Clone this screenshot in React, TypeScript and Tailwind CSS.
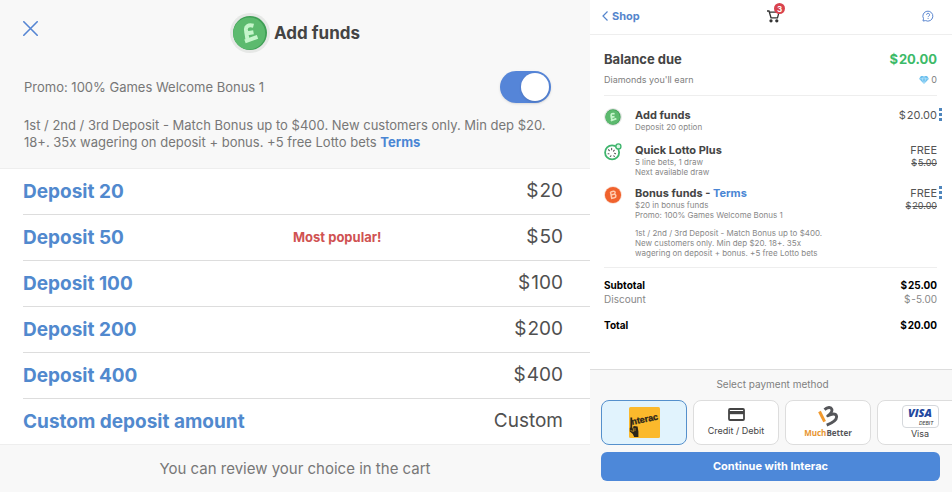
import React, { useState } from "react";

const depositOptions = [
  { label: "Deposit 20", amount: "20" },
  { label: "Deposit 50", amount: "50", note: "Most popular!" },
  { label: "Deposit 100", amount: "100" },
  { label: "Deposit 200", amount: "200" },
  { label: "Deposit 400", amount: "400" },
  { label: "Custom deposit amount" },
];

const paymentMethods = [
  { id: "interac", name: "Interac" },
  { id: "card", name: "Credit / Debit" },
  { id: "muchbetter", name: "MuchBetter" },
  { id: "visa", name: "Visa" },
];

function Money({ value }: { value: string }) {
  return (
    <>
      <span className="mr-px">$</span>
      {value}
    </>
  );
}

function PoundCoin({ className }: { className: string }) {
  return (
    <svg viewBox="0 0 40 40" className={className} aria-hidden="true">
      <circle cx="20" cy="20" r="20" fill="#e6e8e6" />
      <circle cx="20" cy="20" r="17" fill="#3f9f56" />
      <circle cx="19.2" cy="20.4" r="16" fill="#5cba6e" />
      <path
        d="M23.5 12.8C18.500 11.500 15.500 13 16 17l1.500 10M14.500 20.800l9-1.600M15 28.300l12.500-4.500"
        fill="none"
        stroke="#c5f5cb"
        strokeWidth="4"
      />
    </svg>
  );
}

function LottoBall() {
  return (
    <svg viewBox="0 0 20 20" className="size-[18px]" aria-hidden="true">
      <circle cx="9" cy="10.5" r="7.8" fill="#fff" stroke="#3fb56d" strokeWidth="2" />
      <g stroke="#555" strokeWidth="1.2" strokeLinecap="round">
        <path d="M5 7.5l1 1M8.5 6v1.5M11.5 8l-1 1M4.5 12h1M12.8 12l-1-.5M7 15l.7-.8M11.5 15l-.6-.7" />
      </g>
      <circle cx="16" cy="3.8" r="2.8" fill="#d9f5e3" stroke="#3fb56d" strokeWidth="1.5" />
    </svg>
  );
}

function BonusCoin() {
  return (
    <svg viewBox="0 0 20 20" className="size-[18px]" aria-hidden="true">
      <circle cx="10" cy="10" r="10" fill="#fbe3d8" />
      <circle cx="10" cy="10" r="9" fill="#f0622d" />
      <path
        d="M7.2 6.6l3.4-.8c2.200-.3 2.400 2.700.2 3.400L8 9.900M10.800 9.200c3-.4 3.200 3.400.6 3.900l-2.800.7-1.400-7.200"
        fill="none"
        stroke="#ffc9ad"
        strokeWidth="1.7"
      />
    </svg>
  );
}

function CartIcon() {
  return (
    <svg viewBox="0 0 14 14" className="size-3.5" fill="none" stroke="#333" strokeWidth="1.3" aria-hidden="true">
      <path d="M1 2h2l2 6.800h6.500l1.500-5.600H3.500" />
      <circle cx="5" cy="11.8" r="1" fill="#333" />
      <circle cx="10.8" cy="11.8" r="1" fill="#333" />
    </svg>
  );
}

function HelpIcon() {
  return (
    <svg viewBox="0 0 12 12" className="size-3" fill="none" stroke="#5b87d0" strokeWidth="1" aria-hidden="true">
      <path d="M1 11l.5-2.4A5 5 0 1 1 3.6 10.6z" />
      <path d="M4.600 4.800a1.500 1.500 0 1 1 2.200 1.300c-.5.3-.7.5-.7 1M6.100 8v.9" />
    </svg>
  );
}

function DiamondIcon() {
  return (
    <svg viewBox="0 0 10 8" className="h-2 w-2.5" aria-hidden="true">
      <path d="M2 0h6l2 2.800L5 8 0 2.800z" fill="#6cc0ee" />
      <path d="M0 2.800h10M3.200 2.800L5 8l1.800-5.200L5 0z" fill="none" stroke="#d5f0ff" strokeWidth=".5" />
    </svg>
  );
}

function InteracLogo() {
  return (
    <svg viewBox="0 0 31 31" className="size-[31px]" aria-hidden="true">
      <rect width="31" height="31" rx="1.5" fill="#fbb92c" />
      <text
        x="3"
        y="18"
        fill="#2b2419"
        stroke="#2b2419"
        strokeWidth=".3"
        fontSize="9"
        fontWeight="700"
        fontFamily="'Liberation Sans', sans-serif"
        transform="rotate(-12 3 18)"
      >
        nterac
      </text>
      <path d="M1.400 10.500h1.800v11l1.600-2.600 3.800.6.8 5V30H5.200l-1.400-3-3-2.500V21l.6-.5z" fill="#2b2419" />
      <path d="M4 20.500l.8 4M6 21v3M1.600 23.500l3 1" stroke="#fbb92c" strokeWidth=".6" />
    </svg>
  );
}

function MuchBetterLogo() {
  return (
    <svg viewBox="0 0 22 21" className="h-[21px] w-[22px]" fill="none" strokeLinejoin="round" aria-hidden="true">
      <path d="M2.500 5.500l5.100 10.100" stroke="#f29a2e" strokeWidth="3" />
      <path
        d="M7.500 3.600C10.500 1 14 .8 14.800 3.200c.8 2.300-1.300 4.500-4 6.600 4.200-2.300 8-2.500 8.700.4.8 3.500-3.900 6.600-9.800 9"
        stroke="#55565a"
        strokeWidth="2.9"
      />
    </svg>
  );
}

function MethodFace({ id, name }: { id: string; name: string }) {
  if (id === "interac") return <InteracLogo />;
  if (id === "card") {
    return (
      <>
        <svg viewBox="0 0 17 13" className="mb-1 h-[13px] w-[17px]" aria-hidden="true">
          <rect x="1" y="1" width="15" height="11" rx="1" fill="#fff" stroke="#444" strokeWidth="1.8" />
          <path d="M1 3h15v3.200H1z" fill="#444" />
        </svg>
        <span>{name}</span>
      </>
    );
  }
  if (id === "muchbetter") {
    return (
      <>
        <MuchBetterLogo />
        <span className="font-['Open_Sans',sans-serif] text-[8px] font-bold text-[#55565a]">
          <span className="text-[#e8952f]">Much</span>Better
        </span>
      </>
    );
  }
  return (
    <>
      <span className="flex h-[23px] w-[37px] flex-col items-center rounded-sm border border-[#d5d8dc] bg-white">
        <span className="font-['Open_Sans',sans-serif] text-[11px] leading-[14px] font-extrabold text-[#2348a0] italic">
          VISA
        </span>
        <span className="mr-1 self-end text-[5px] leading-[6px] font-medium text-[#444] italic">DEBIT</span>
      </span>
      <span>{name}</span>
    </>
  );
}

function AddFunds() {
  const [promo, setPromo] = useState(true);

  return (
    <section className="flex min-w-0 flex-col bg-[#f8f8f8]">
      <header className="grid grid-cols-[1fr_auto_1fr] items-center px-[23px] pt-[13px]">
        <button type="button" aria-label="Close" className="mb-2.5 w-fit">
          <svg viewBox="0 0 15 15" className="size-[15px]" stroke="#5585d3" strokeWidth="1.6" strokeLinecap="round">
            <path d="M.8.8l13.400 13.400M14.200.8L.8 14.200" />
          </svg>
        </button>
        <div className="flex items-center gap-1">
          <PoundCoin className="size-10" />
          <h1 className="pt-0.5 text-[17px] font-bold text-[#444]">Add funds</h1>
        </div>
      </header>

      <div className="flex items-center justify-between pt-[18px] pr-[39px] pl-6 text-[13px] text-[#777]">
        <label htmlFor="promo" className="pt-0.5">
          Promo: 100% Games Welcome Bonus 1
        </label>
        <input
          id="promo"
          type="checkbox"
          role="switch"
          checked={promo}
          onChange={(e) => setPromo(e.target.checked)}
          className="h-8 w-[51px] cursor-pointer appearance-none rounded-full bg-[#bbb] p-0.5 shadow-sm before:block before:size-7 before:rounded-full before:bg-white before:shadow checked:bg-[#5585d8] checked:before:ml-[19px]"
        />
      </div>

      <p className="px-6 pt-[14px] pb-[17px] text-[13px] leading-[17px] text-[#777]">
        1st / 2nd / 3rd Deposit - Match Bonus up to $400. New customers only. Min dep $20.
        <br />
        18+. 35x wagering on deposit + bonus. +5 free Lotto bets{" "}
        <a href="#terms" className="font-bold text-[#4a86d4]">
          Terms
        </a>
      </p>

      <ul className="border-y border-[#eee] bg-white pl-[23px]">
        {depositOptions.map((option) => (
          <li key={option.label} className="border-b border-[#ddd] last:border-b-0">
            <button type="button" className="grid h-[45px] w-full grid-cols-2 items-center pr-[27px] text-left">
              <span className="pt-0.5 text-[19px] font-bold whitespace-nowrap text-[#5189ce]">{option.label}</span>
              <span className="flex items-center justify-between">
                <span className="text-[13px] font-bold text-[#d05252]">{option.note}</span>
                <span className="text-[19px] text-[#505050]">
                  {option.amount ? <Money value={option.amount} /> : "Custom"}
                </span>
              </span>
            </button>
          </li>
        ))}
      </ul>

      <p className="flex h-12 items-center justify-center text-[15px] text-[#777]">
        You can review your choice in the cart
      </p>
    </section>
  );
}

function MoreButton({ label }: { label: string }) {
  return (
    <button type="button" aria-label={label}>
      <svg viewBox="0 0 3 13" className="block h-[13px] w-[3px]" fill="#4f86bd">
        <path d="M0 0h3v3H0zM0 5h3v3H0zM0 10h3v3H0z" />
      </svg>
    </button>
  );
}

function Cart() {
  const [method, setMethod] = useState("interac");
  const selected = paymentMethods.find((m) => m.id === method);

  return (
    <section className="flex min-w-0 flex-col bg-white">
      <header className="grid h-[35px] grid-cols-3 items-center border-b border-[#eee] pr-[18px] pb-0.5 pl-3">
        <a href="#shop" className="flex items-center gap-1 text-[11px] font-bold text-[#5585cc]">
          <svg viewBox="0 0 6 10" className="h-2.5 w-1.5" fill="none" stroke="currentColor" strokeWidth="1.2">
            <path d="M5.500.5L1 5l4.500 4.500" />
          </svg>
          Shop
        </a>
        <a href="#cart" aria-label="Cart" className="relative ml-2.5 justify-self-center">
          <CartIcon />
          <span className="absolute -top-1.5 left-2 flex size-[11px] items-center justify-center rounded-full bg-[#d9434e] text-[8px] font-bold text-white">
            3
          </span>
        </a>
        <button type="button" aria-label="Help" className="justify-self-end">
          <HelpIcon />
        </button>
      </header>

      <div className="pr-[15px] pl-3.5">
        <div className="flex justify-between pt-3.5 text-[13px] leading-5 font-bold">
          <h2 className="text-[#444]">Balance due</h2>
          <span className="text-[#3cba68]">
            <Money value="20.00" />
          </span>
        </div>
        <div className="flex justify-between border-b border-[#eee] pt-[3px] pb-[7px] text-[9px] leading-4 text-[#808080]">
          <span>Diamonds you'll earn</span>
          <span className="flex items-center gap-0.5">
            <DiamondIcon />0
          </span>
        </div>

        <ul className="grid gap-[9px] border-b border-[#eee] pt-3 pb-[9px] text-[8px] leading-[10px] text-[#888]">
          <li className="mb-0.5 flex">
            <PoundCoin className="size-[18px]" />
            <div className="ml-[13px] flex-1">
              <h3 className="text-[11px] leading-[14px] font-bold text-[#444]">Add funds</h3>
              <p>Deposit 20 option</p>
            </div>
            <div className="-mr-[5px] flex items-start gap-0.5 text-[11px] leading-[14px] text-[#555]">
              <p>
                <Money value="20.00" />
              </p>
              <MoreButton label="Add funds options" />
            </div>
          </li>
          <li className="flex">
            <LottoBall />
            <div className="ml-[13px] flex-1">
              <h3 className="text-[11px] leading-[14px] font-bold text-[#444]">Quick Lotto Plus</h3>
              <p>5 line bets, 1 draw</p>
              <p>Next available draw</p>
            </div>
            <div className="text-right text-[11px] leading-[14px] text-[#555]">
              <p>FREE</p>
              <s className="block text-[9px] leading-3">
                <Money value="5.00" />
              </s>
            </div>
          </li>
          <li className="flex">
            <BonusCoin />
            <div className="ml-[13px] flex-1">
              <h3 className="text-[11px] leading-[14px] font-bold text-[#444]">
                Bonus funds -{" "}
                <a href="#terms" className="text-[#4a86d4]">
                  Terms
                </a>
              </h3>
              <p>$20 in bonus funds</p>
              <p>Promo: 100% Games Welcome Bonus 1</p>
              <p className="mt-2">
                1st / 2nd / 3rd Deposit - Match Bonus up to $400.
                <br />
                New customers only. Min dep $20. 18+. 35x
                <br />
                wagering on deposit + bonus. +5 free Lotto bets
              </p>
            </div>
            <div className="-mr-[5px] flex items-start gap-0.5 text-right text-[11px] leading-[14px] text-[#555]">
              <div>
                <p>FREE</p>
                <s className="block text-[9px] leading-3">
                  <Money value="20.00" />
                </s>
              </div>
              <MoreButton label="Bonus funds options" />
            </div>
          </li>
        </ul>

        <dl className="grid grid-cols-[1fr_auto] pt-2.5 pb-9 text-[10px] leading-[14px]">
          <dt className="font-bold text-black">Subtotal</dt>
          <dd className="text-right font-bold text-black">
            <Money value="25.00" />
          </dd>
          <dt className="text-[#888]">Discount</dt>
          <dd className="text-right text-[#888]">
            <Money value="-5.00" />
          </dd>
          <dt className="mt-3 font-bold text-black">Total</dt>
          <dd className="mt-3 text-right font-bold text-black">
            <Money value="20.00" />
          </dd>
        </dl>
      </div>

      <footer className="mt-auto border-t border-[#ddd] bg-[#f8f8f8] pb-3 pl-[11px]">
        <fieldset className="min-w-0">
          <legend className="mx-auto pt-1.5 pr-2 pb-2 text-[10px] leading-4 text-[#808080]">
            Select payment method
          </legend>
          <div className="flex gap-1.5 overflow-hidden">
            {paymentMethods.map(({ id, name }) => (
              <label
                key={id}
                className="flex h-[45px] w-[86px] shrink-0 cursor-pointer flex-col items-center justify-center rounded-lg border border-[#ddd] bg-white text-[9px] leading-3 text-[#444] has-checked:border-[#5590cc] has-checked:bg-[#e1f3fd]"
              >
                <input
                  type="radio"
                  name="method"
                  value={id}
                  aria-label={name}
                  checked={method === id}
                  onChange={() => setMethod(id)}
                  className="sr-only"
                />
                <MethodFace id={id} name={name} />
              </label>
            ))}
          </div>
        </fieldset>
        <div className="pt-[7px] pr-3">
          <button type="button" className="h-[29px] w-full rounded-md bg-[#4d88d9] text-[11px] font-bold text-white">
            Continue with {selected?.name}
          </button>
        </div>
      </footer>
    </section>
  );
}

export default function App() {
  return (
    <main className="grid min-h-screen grid-cols-[590fr_362fr] font-[Inter,sans-serif]">
      <AddFunds />
      <Cart />
    </main>
  );
}
